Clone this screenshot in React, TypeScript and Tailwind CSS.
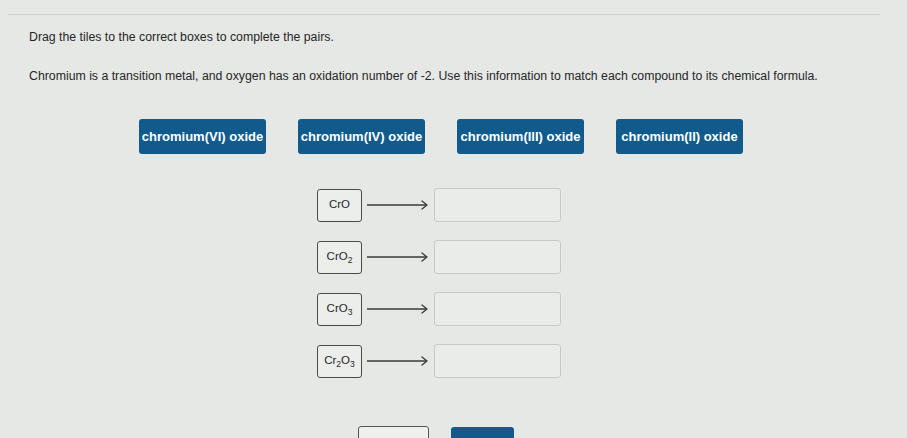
import React from "react";

const names = [
  "chromium(VI) oxide",
  "chromium(IV) oxide",
  "chromium(III) oxide",
  "chromium(II) oxide",
];

function Formula({ parts }: { parts: [string, string?][] }) {
  return (
    <span>
      {parts.map(([t, s], i) => (
        <React.Fragment key={i}>
          {t}
          {s ? <sub className="text-[8.5px]">{s}</sub> : null}
        </React.Fragment>
      ))}
    </span>
  );
}

const formulas: [string, string?][][] = [
  [["CrO"]],
  [["CrO", "2"]],
  [["CrO", "3"]],
  [["Cr", "2"], ["O", "3"]],
];

function Arrow() {
  return (
    <svg width="64" height="12" viewBox="0 0 64 12" className="shrink-0">
      <line x1="1" y1="6" x2="61" y2="6" stroke="#3a3a3a" strokeWidth="1.3" />
      <path d="M56 2 L61 6 L56 10" fill="none" stroke="#3a3a3a" strokeWidth="1.3" strokeLinecap="round" strokeLinejoin="round" />
    </svg>
  );
}

export default function App() {
  return (
    <div
      className="w-[907px] h-[438px] overflow-hidden bg-[#e6e8e6] text-[#262626]"
      style={{ fontFamily: '"Liberation Sans", Arial, sans-serif' }}
    >
      <div className="mx-[8px] w-[872px] h-[15px] border-b border-[#cfd2cf]" />

      <p className="mt-[14px] pl-[29px] text-[12.3px] leading-[16px]">
        Drag the tiles to the correct boxes to complete the pairs.
      </p>
      <p className="mt-[23px] pl-[29px] text-[12.3px] leading-[16px]">
        Chromium is a transition metal, and oxygen has an oxidation number of -2. Use this information to match each compound to its chemical formula.
      </p>

      <div className="mt-[35px] ml-[139px] flex gap-[32px]">
        {names.map((n) => (
          <div
            key={n}
            className="w-[127px] h-[35px] rounded-[3px] bg-[#105b8c] text-white text-[13px] font-bold flex items-center justify-center whitespace-nowrap"
          >
            {n}
          </div>
        ))}
      </div>

      <div className="mt-[34px] ml-[317px] flex flex-col gap-[18px]">
        {formulas.map((f, i) => (
          <div key={i} className="flex items-center">
            <div className="w-[45px] h-[33px] rounded-[3px] border-[1.5px] border-[#4a4a4a] bg-[#eceeec] text-[11.5px] flex items-center justify-center">
              <Formula parts={f} />
            </div>
            <div className="mx-[4px]">
              <Arrow />
            </div>
            <div className="w-[127px] h-[34px] rounded-[3px] border border-[#c6cac6] bg-[#eaecea]" />
          </div>
        ))}
      </div>

      <div className="mt-[48px] ml-[358px] flex gap-[22px] items-start">
        <div className="w-[71px] h-[30px] rounded-[3px] border border-[#555] bg-[#eef0ee] text-[12px] flex items-center justify-center pt-[14px]">
          Reset
        </div>
        <div className="mt-[1px] w-[63px] h-[30px] rounded-[3px] bg-[#105b8c] text-white text-[12px] flex items-center justify-center pt-[14px]">
          Next
        </div>
      </div>
    </div>
  );
}
